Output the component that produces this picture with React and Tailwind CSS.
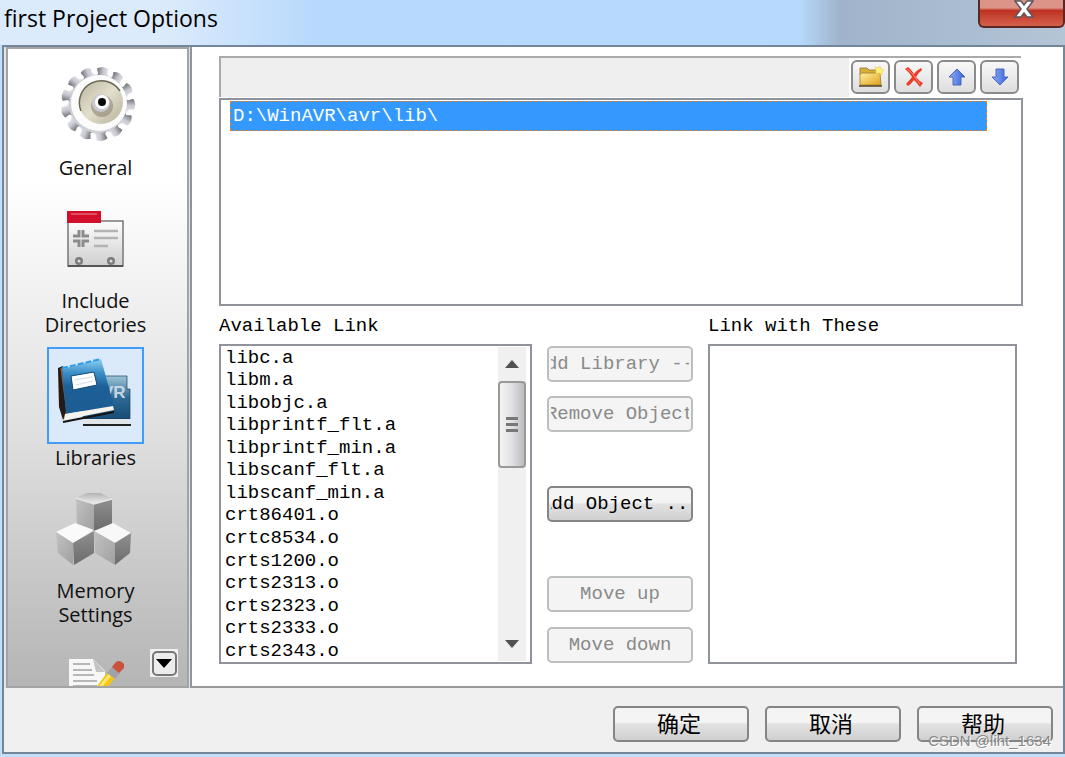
import { useState } from "react";

const DIRECTORIES = ["D:\\WinAVR\\avr\\lib\\"];

const LIBRARIES = [
  "libc.a",
  "libm.a",
  "libobjc.a",
  "libprintf_flt.a",
  "libprintf_min.a",
  "libscanf_flt.a",
  "libscanf_min.a",
  "crt86401.o",
  "crtc8534.o",
  "crts1200.o",
  "crts2313.o",
  "crts2323.o",
  "crts2333.o",
  "crts2343.o",
];

const MONO = "font-['Liberation_Mono',monospace] text-[19px]";
const RAISED = "border-2 border-[#858585] bg-linear-to-b from-[#f4f4f4] from-45% via-[#e2e2e2] via-50% to-[#d0d0d0]";

function GearIcon() {
  return (
    <svg viewBox="0 0 97 97" className="w-full">
      <defs>
        <linearGradient id="tooth" x1="0" y1="0" x2="1" y2="0">
          <stop offset="0" stopColor="#5f5f66" />
          <stop offset="0.5" stopColor="#c9c9d2" />
          <stop offset="1" stopColor="#ececf2" />
        </linearGradient>
        <linearGradient id="disc" x1="0" y1="0" x2="1" y2="1">
          <stop offset="0" stopColor="#b9b39b" />
          <stop offset="0.5" stopColor="#e2dfcc" />
          <stop offset="1" stopColor="#b5af97" />
        </linearGradient>
      </defs>
      {Array.from({ length: 13 }, (_, i) => (
        <path
          key={i}
          transform={`rotate(${i * 27.7 + 8} 51 47)`}
          d="M44 21L47 17L45 12Q50 8 56 11L56 16L60 20Z"
          fill="url(#tooth)"
        />
      ))}
      <circle cx="51" cy="47" r="29" fill="#cfcfd8" />
      <circle cx="52" cy="46" r="28" fill="#fcfcfd" />
      <circle cx="54" cy="45" r="22" fill="url(#disc)" />
      <path d="M34 54A22 22 0 0 1 73 34" fill="none" stroke="#6c6857" strokeWidth="1.5" />
      <circle cx="55" cy="49" r="11" fill="#8d8773" opacity="0.6" />
      <circle cx="54" cy="46" r="9" fill="#c9c9cf" />
      <circle cx="55" cy="45" r="7" fill="#fff" />
      <circle cx="55" cy="45" r="4" fill="#0b0b0b" />
    </svg>
  );
}

function IncludeIcon() {
  return (
    <svg viewBox="0 0 97 97" className="w-full">
      <defs>
        <linearGradient id="card" x1="0" y1="0" x2="0" y2="1">
          <stop offset="0" stopColor="#fdfdfd" />
          <stop offset="1" stopColor="#cfcfcf" />
        </linearGradient>
      </defs>
      <rect x="21" y="31" width="55" height="45" fill="url(#card)" stroke="#777" strokeWidth="1.5" />
      <rect x="20" y="21" width="34" height="12" fill="#d3102c" />
      <path d="M24 24H50" stroke="#f08a98" />
      <path d="M47 41H71M47 48H71M47 56H61" stroke="#b3b3b3" strokeWidth="2.5" />
      <path d="M26 46H32V40M36 40V46H42M42 51H36V57M32 57V51H26" fill="none" stroke="#8b8b8b" strokeWidth="3" />
      <circle cx="32" cy="71" r="4" fill="#7c7c7c" />
      <circle cx="32" cy="71" r="1.5" fill="#ddd" />
      <circle cx="64" cy="71" r="4" fill="#7c7c7c" />
      <circle cx="64" cy="71" r="1.5" fill="#ddd" />
      <path d="M21 76H76" stroke="#555" strokeWidth="2" />
    </svg>
  );
}

function BooksIcon() {
  return (
    <svg viewBox="0 0 97 97" className="w-full">
      <defs>
        <linearGradient id="cover" x1="0" y1="0" x2="0" y2="1">
          <stop offset="0" stopColor="#8fd0f2" />
          <stop offset="0.25" stopColor="#3b8fc9" />
          <stop offset="0.5" stopColor="#1c6097" />
          <stop offset="1" stopColor="#1d5c92" />
        </linearGradient>
        <linearGradient id="back" x1="0" y1="0" x2="0" y2="1">
          <stop offset="0" stopColor="#9fc4d6" />
          <stop offset="0.5" stopColor="#2c6a95" />
          <stop offset="1" stopColor="#174c76" />
        </linearGradient>
      </defs>
      <path d="M50 29H80V42H83V72H36V60Z" fill="url(#back)" stroke="#1b4160" strokeWidth="0.7" />
      <text x="55" y="51" fontSize="17" fontWeight="bold" fill="#c3d6e2" className="font-['Liberation_Sans',sans-serif]">VR</text>
      <path d="M36 72H83V77H36Z" fill="#dfe5e8" />
      <path d="M36 78H84" stroke="#222" strokeWidth="2" />
      <path d="M11 21L16 19L22 64L16 73L12 60Z" fill="#241a17" />
      <path d="M14 21L20 64L17 72" stroke="#8d5a3c" fill="none" strokeWidth="1.5" />
      <path d="M15 22L54 12L67 59L19 67Z" fill="url(#cover)" />
      <path d="M15 21L54 12" stroke="#2c9be8" strokeWidth="2" strokeDasharray="6 2" />
      <path d="M18 67L66 59L67 63L17 73Z" fill="#f6f3ec" />
      <path d="M16 75L67 65" stroke="#17120f" strokeWidth="2" />
      <path d="M24 29L47 25L50 38L26 43Z" fill="#fff" stroke="#12486f" />
      <path d="M28 33L45 30M29 38L46 34" stroke="#cfdcea" />
    </svg>
  );
}

function CubesIcon() {
  return (
    <svg viewBox="0 0 97 97" className="w-full">
      <defs>
        <linearGradient id="dark" x1="0" y1="0" x2="0" y2="1">
          <stop offset="0" stopColor="#8f8f8f" />
          <stop offset="1" stopColor="#6c6c6c" />
        </linearGradient>
        <linearGradient id="mid" x1="0" y1="0" x2="1" y2="1">
          <stop offset="0" stopColor="#c2c2c2" />
          <stop offset="1" stopColor="#a0a0a0" />
        </linearGradient>
        <linearGradient id="lid" x1="0" y1="0" x2="0" y2="1">
          <stop offset="0" stopColor="#b4b4b4" />
          <stop offset="1" stopColor="#f0f0f0" />
        </linearGradient>
      </defs>
      <path d="M29 18L40 13L54 13L65 19L47 24Z" fill="url(#lid)" />
      <path d="M29 18L47 24V51L30 46Z" fill="url(#mid)" />
      <path d="M47 24L65 19V46L47 51Z" fill="url(#dark)" />
      <path d="M29 18L47 24L65 19" fill="none" stroke="#e6e6e6" strokeWidth="1.5" />
      <path d="M9 52L28 43L47 50L26 63Z" fill="#fafafa" />
      <path d="M9 52L26 63V85L11 73Z" fill="url(#mid)" />
      <path d="M26 63L47 51V73L27 85Z" fill="url(#dark)" />
      <path d="M47 51L66 43L84 53L68 63Z" fill="#f8f8f8" />
      <path d="M47 51L68 63V85L48 73Z" fill="url(#mid)" />
      <path d="M68 63L84 53L83 73L68 85Z" fill="url(#dark)" />
    </svg>
  );
}

function NotesIcon() {
  return (
    <svg viewBox="0 0 97 97" className="w-full">
      <path d="M22 22H46L58 34V80H22Z" fill="#f7f7f7" />
      <path d="M46 22L58 35H49Z" fill="#c4c4c4" />
      <path d="M26 27H43M26 33H45M26 38H47M26 44H50M26 49H50" stroke="#a3a3a3" strokeWidth="1.5" />
      <path d="M40 62L60 36L68 41L48 66Z" fill="#f5c518" />
      <path d="M43 62L63 38" stroke="#ffe873" strokeWidth="3" />
      <path d="M60 36L65 30L73 36L68 42Z" fill="#a2a2a6" />
      <path d="M65 30L69 25Q73 22 77 27L77 31L72 36Z" fill="#c9533c" />
    </svg>
  );
}

const PAGES = [
  { id: "general", label: "General", Icon: GearIcon },
  { id: "include", label: "Include Directories", Icon: IncludeIcon },
  { id: "libraries", label: "Libraries", Icon: BooksIcon },
  { id: "memory", label: "Memory Settings", Icon: CubesIcon },
  { id: "custom", label: "", Icon: NotesIcon },
];

function FolderIcon() {
  return (
    <svg viewBox="0 0 26 22" className="w-[26px]">
      <defs>
        <linearGradient id="folder" x1="0" y1="0" x2="1" y2="1">
          <stop offset="0" stopColor="#fff0a0" />
          <stop offset="1" stopColor="#dfa21a" />
        </linearGradient>
      </defs>
      <path d="M2 2H9L11 4H21V9H2Z" fill="#d9ae3c" stroke="#94742a" strokeWidth="0.8" />
      <path d="M2 19V8L4 7H22L23 19Z" fill="url(#folder)" stroke="#a07c26" strokeWidth="0.8" />
      <path d="M1 20H24" stroke="#4f431f" strokeWidth="1.5" />
      <path d="M17 1L20 2L22 0L23 3L26 4L24 6L24 9L21 7L18 8L18 5Z" fill="#fff27a" stroke="#e9c944" strokeWidth="0.6" />
    </svg>
  );
}

function DeleteIcon() {
  return (
    <svg viewBox="0 0 22 22" className="w-[22px]">
      <path d="M2 3L5 1Q9 4 11 8Q14 4 18 2L19 4Q15 7 13 11Q16 15 20 17L17 21Q14 17 11 14Q8 18 5 20L3 18Q7 14 9 11Q6 6 2 3Z" fill="#ee3b26" />
      <path d="M4 3Q9 6 12 11Q14 15 17 18" stroke="#ff8a75" fill="none" />
    </svg>
  );
}

function ArrowIcon({ down }) {
  return (
    <svg viewBox="0 0 20 20" className="w-5">
      <defs>
        <linearGradient id="arrow" x1="0" y1="0" x2="1" y2="0">
          <stop offset="0" stopColor="#8fb0f8" />
          <stop offset="1" stopColor="#3560d6" />
        </linearGradient>
      </defs>
      <path
        d={down ? "M6 2H14V10H18L10 18L2 10H6Z" : "M6 18H14V10H18L10 2L2 10H6Z"}
        fill="url(#arrow)"
        stroke="#4a68b8"
      />
    </svg>
  );
}

function ToolButton({ label, children }) {
  return (
    <button aria-label={label} className="flex h-[34px] w-[39px] items-center justify-center rounded-md border-2 border-[#8b8b8b] bg-linear-to-b from-[#f8f8f8] to-[#dedede]">
      {children}
    </button>
  );
}

// Captions longer than the button are clipped on both sides.
function SideButton({ children, disabled, className = "" }) {
  return (
    <button
      disabled={disabled}
      className={`flex h-9 w-full items-center rounded-[5px] px-[2px] leading-6 ${MONO} ${
        disabled ? "border-2 border-[#bcbfbf] bg-[#f4f4f4] text-[#8a8a8a]" : `${RAISED} text-black`
      } ${className}`}
    >
      <span className="flex w-full justify-center overflow-hidden">
        <span className="shrink-0 whitespace-pre">{children}</span>
      </span>
    </button>
  );
}

function DialogButton({ children }) {
  return (
    <button className={`flex h-9 w-[136px] items-center justify-center rounded-[5px] pr-1 pb-1 font-['Noto_Sans_CJK_SC',sans-serif] text-[22px] leading-7 text-black ${RAISED}`}>
      {children}
    </button>
  );
}

function Scrollbar() {
  return (
    <div className="my-px mr-1 flex w-7 shrink-0 flex-col bg-[#f0f0f0]">
      <button aria-label="Scroll up" className="flex h-[34px] items-center justify-center">
        <svg viewBox="0 0 14 8" className="w-[14px]"><path d="M0 8L7 0L14 8Z" fill="#505050" /></svg>
      </button>
      <div className="flex h-[87px] flex-col items-center justify-center gap-[3px] rounded-sm border-2 border-[#999] bg-linear-to-r from-[#f5f5f5] via-[#e0e0e4] to-[#bcbcc0]">
        <span className="h-[3px] w-3 bg-[#777]" />
        <span className="h-[3px] w-3 bg-[#777]" />
        <span className="h-[3px] w-3 bg-[#777]" />
      </div>
      <button aria-label="Scroll down" className="mt-auto flex h-[34px] items-center justify-center">
        <svg viewBox="0 0 14 8" className="w-[14px]"><path d="M0 0L7 8L14 0Z" fill="#505050" /></svg>
      </button>
    </div>
  );
}

function Sidebar({ page, onSelect }) {
  return (
    <nav className="relative w-[183px] shrink-0 overflow-hidden border-2 border-[#a3a3a6] bg-linear-to-b from-white from-20% via-[#e0e0e0] via-60% to-[#b5b5b5]">
      <ul className="absolute inset-x-0 top-0 flex flex-col items-center gap-[10px] pt-2 pr-1">
        {PAGES.map(({ id, label, Icon }) => (
          <li key={id}>
            <button aria-label={label || "Custom options"} onClick={() => onSelect(id)} className="flex w-[120px] flex-col items-center gap-[2px]">
              <span className={`block w-[97px] border-2 ${id === page ? "border-[#409cf7] bg-[#dbeafa]" : "border-transparent"}`}>
                <span className="-m-[2px] block">
                  <Icon />
                </span>
              </span>
              {label && <span className="font-['Open_Sans',sans-serif] text-[20px] leading-6 text-[#111]">{label}</span>}
            </button>
          </li>
        ))}
      </ul>
      <button aria-label="More pages" className="absolute right-[9px] bottom-[9px] flex size-7 items-center justify-center bg-[#f0f0f0]">
        <span className="flex size-[25px] items-center justify-center rounded-[5px] border-2 border-[#777] bg-[#ececec]">
          <svg viewBox="0 0 16 9" className="w-4"><path d="M0 0H16L8 9Z" fill="#000" /></svg>
        </span>
      </button>
    </nav>
  );
}

export default function App() {
  const [page, setPage] = useState("libraries");
  const [selected, setSelected] = useState(null);

  return (
    <div className="relative flex h-screen flex-col overflow-hidden bg-[#c3def7] pl-[2px] text-black">
      <header className="-ml-[2px] flex h-[45px] shrink-0 items-start justify-between bg-linear-to-r from-[#dcebfb] from-15% via-[#b7d9fd] via-30% to-[#b7d9fd] to-70%">
        <h1 className="pt-1 pl-1 font-['Open_Sans',sans-serif] text-[23px] leading-7">first Project Options</h1>
        <div className="flex h-full w-[280px] justify-end bg-linear-to-r from-[#b7d9fd] from-5% via-[#9fb3ca] via-20% to-[#b4c5d6]">
          <button aria-label="Close" className="flex h-7 w-[87px] items-center justify-center rounded-b-md border-2 border-t-0 border-[#5c2622] bg-linear-to-b from-[#dc9488] from-30% via-[#bd3020] via-40% to-[#d4604c]">
            <svg viewBox="0 0 20 18" className="mb-2 ml-1 w-5">
              <path d="M1 1H7L10 5L13 1H19L13 9L19 17H13L10 13L7 17H1L7 9Z" fill="#fff" stroke="#5b5560" strokeWidth="1.5" />
            </svg>
          </button>
        </div>
      </header>

      <div className="flex min-h-0 flex-1 flex-col border-2 border-[#73869a] bg-[#f0f0f0]">
        <main className="flex min-h-0 flex-1 bg-[#e2e4e8] pl-[2px]">
          <Sidebar page={page} onSelect={setPage} />
          <section className="ml-px flex min-w-0 flex-1 flex-col border-b-2 border-l-2 border-[#8d949d] border-b-[#98999b] bg-white pt-[9px] pr-10 pb-[22px] pl-[27px]">
            <div className="mr-[2px] flex h-[41px] shrink-0 justify-end border-t-2 border-l-2 border-[#aaa] bg-[#efefef]">
              <div className="flex items-start gap-1 bg-white px-[2px] pt-[2px]">
                <ToolButton label="New directory"><FolderIcon /></ToolButton>
                <ToolButton label="Delete directory"><DeleteIcon /></ToolButton>
                <ToolButton label="Move directory up"><ArrowIcon /></ToolButton>
                <ToolButton label="Move directory down"><ArrowIcon down /></ToolButton>
              </div>
            </div>
            <ul aria-label="Library directories" className="mt-px min-h-0 flex-[206_0_0px] border-2 border-[#909399] pt-px pr-[34px] pl-[9px]">
              {DIRECTORIES.map((dir) => (
                <li key={dir} className={`border border-dashed border-[#d9822b] bg-[#3399ff] px-[2px] leading-7 text-white ${MONO}`}>
                  {dir}
                </li>
              ))}
            </ul>

            <div className="flex min-h-0 flex-[362_0_0px] gap-[15px] pr-[6px]">
              <div className="flex w-[313px] shrink-0 flex-col">
                <h2 id="available" className={`pt-2 pb-[6px] leading-6 ${MONO}`}>Available Link</h2>
                <div className="flex min-h-0 flex-1 border-2 border-[#909399]">
                  <ul aria-labelledby="available" role="listbox" className="flex min-w-0 flex-1 flex-col pl-1">
                    {LIBRARIES.map((lib) => (
                      <li
                        key={lib}
                        role="option"
                        aria-selected={lib === selected}
                        onClick={() => setSelected(lib)}
                        className={`flex min-h-0 flex-1 items-center leading-[22px] ${MONO} ${lib === selected ? "bg-[#3399ff] text-white" : ""}`}
                      >
                        {lib}
                      </li>
                    ))}
                  </ul>
                  <Scrollbar />
                </div>
              </div>

              <div className="flex w-[146px] shrink-0 flex-col pt-10">
                <SideButton disabled>{"Add Library -->"}</SideButton>
                <SideButton disabled className="mt-[14px]">Remove Object</SideButton>
                <SideButton className="mt-[54px]">Add Object ...</SideButton>
                <SideButton disabled className="mt-[54px]">Move up</SideButton>
                <SideButton disabled className="mt-[15px]">Move down</SideButton>
              </div>

              <div className="flex min-w-0 flex-1 flex-col">
                <h2 id="linked" className={`pt-2 pb-[6px] leading-6 ${MONO}`}>Link with These</h2>
                <ul aria-labelledby="linked" role="listbox" className="min-h-0 flex-1 border-2 border-[#909399]" />
              </div>
            </div>
          </section>
        </main>

        <footer className="flex h-16 shrink-0 items-center justify-end gap-4 pt-2 pr-[10px]">
          <DialogButton>确定</DialogButton>
          <DialogButton>取消</DialogButton>
          <DialogButton>帮助</DialogButton>
        </footer>
      </div>
      <div className="h-[3px] shrink-0 bg-[#c3def7]" />

      <span className="absolute right-[14px] bottom-[6px] font-['Liberation_Sans',sans-serif] text-[15px] leading-5 text-[#8a8a8a] text-shadow-[1px_1px_0_#fff]">
        CSDN @liht_1634
      </span>
    </div>
  );
}
